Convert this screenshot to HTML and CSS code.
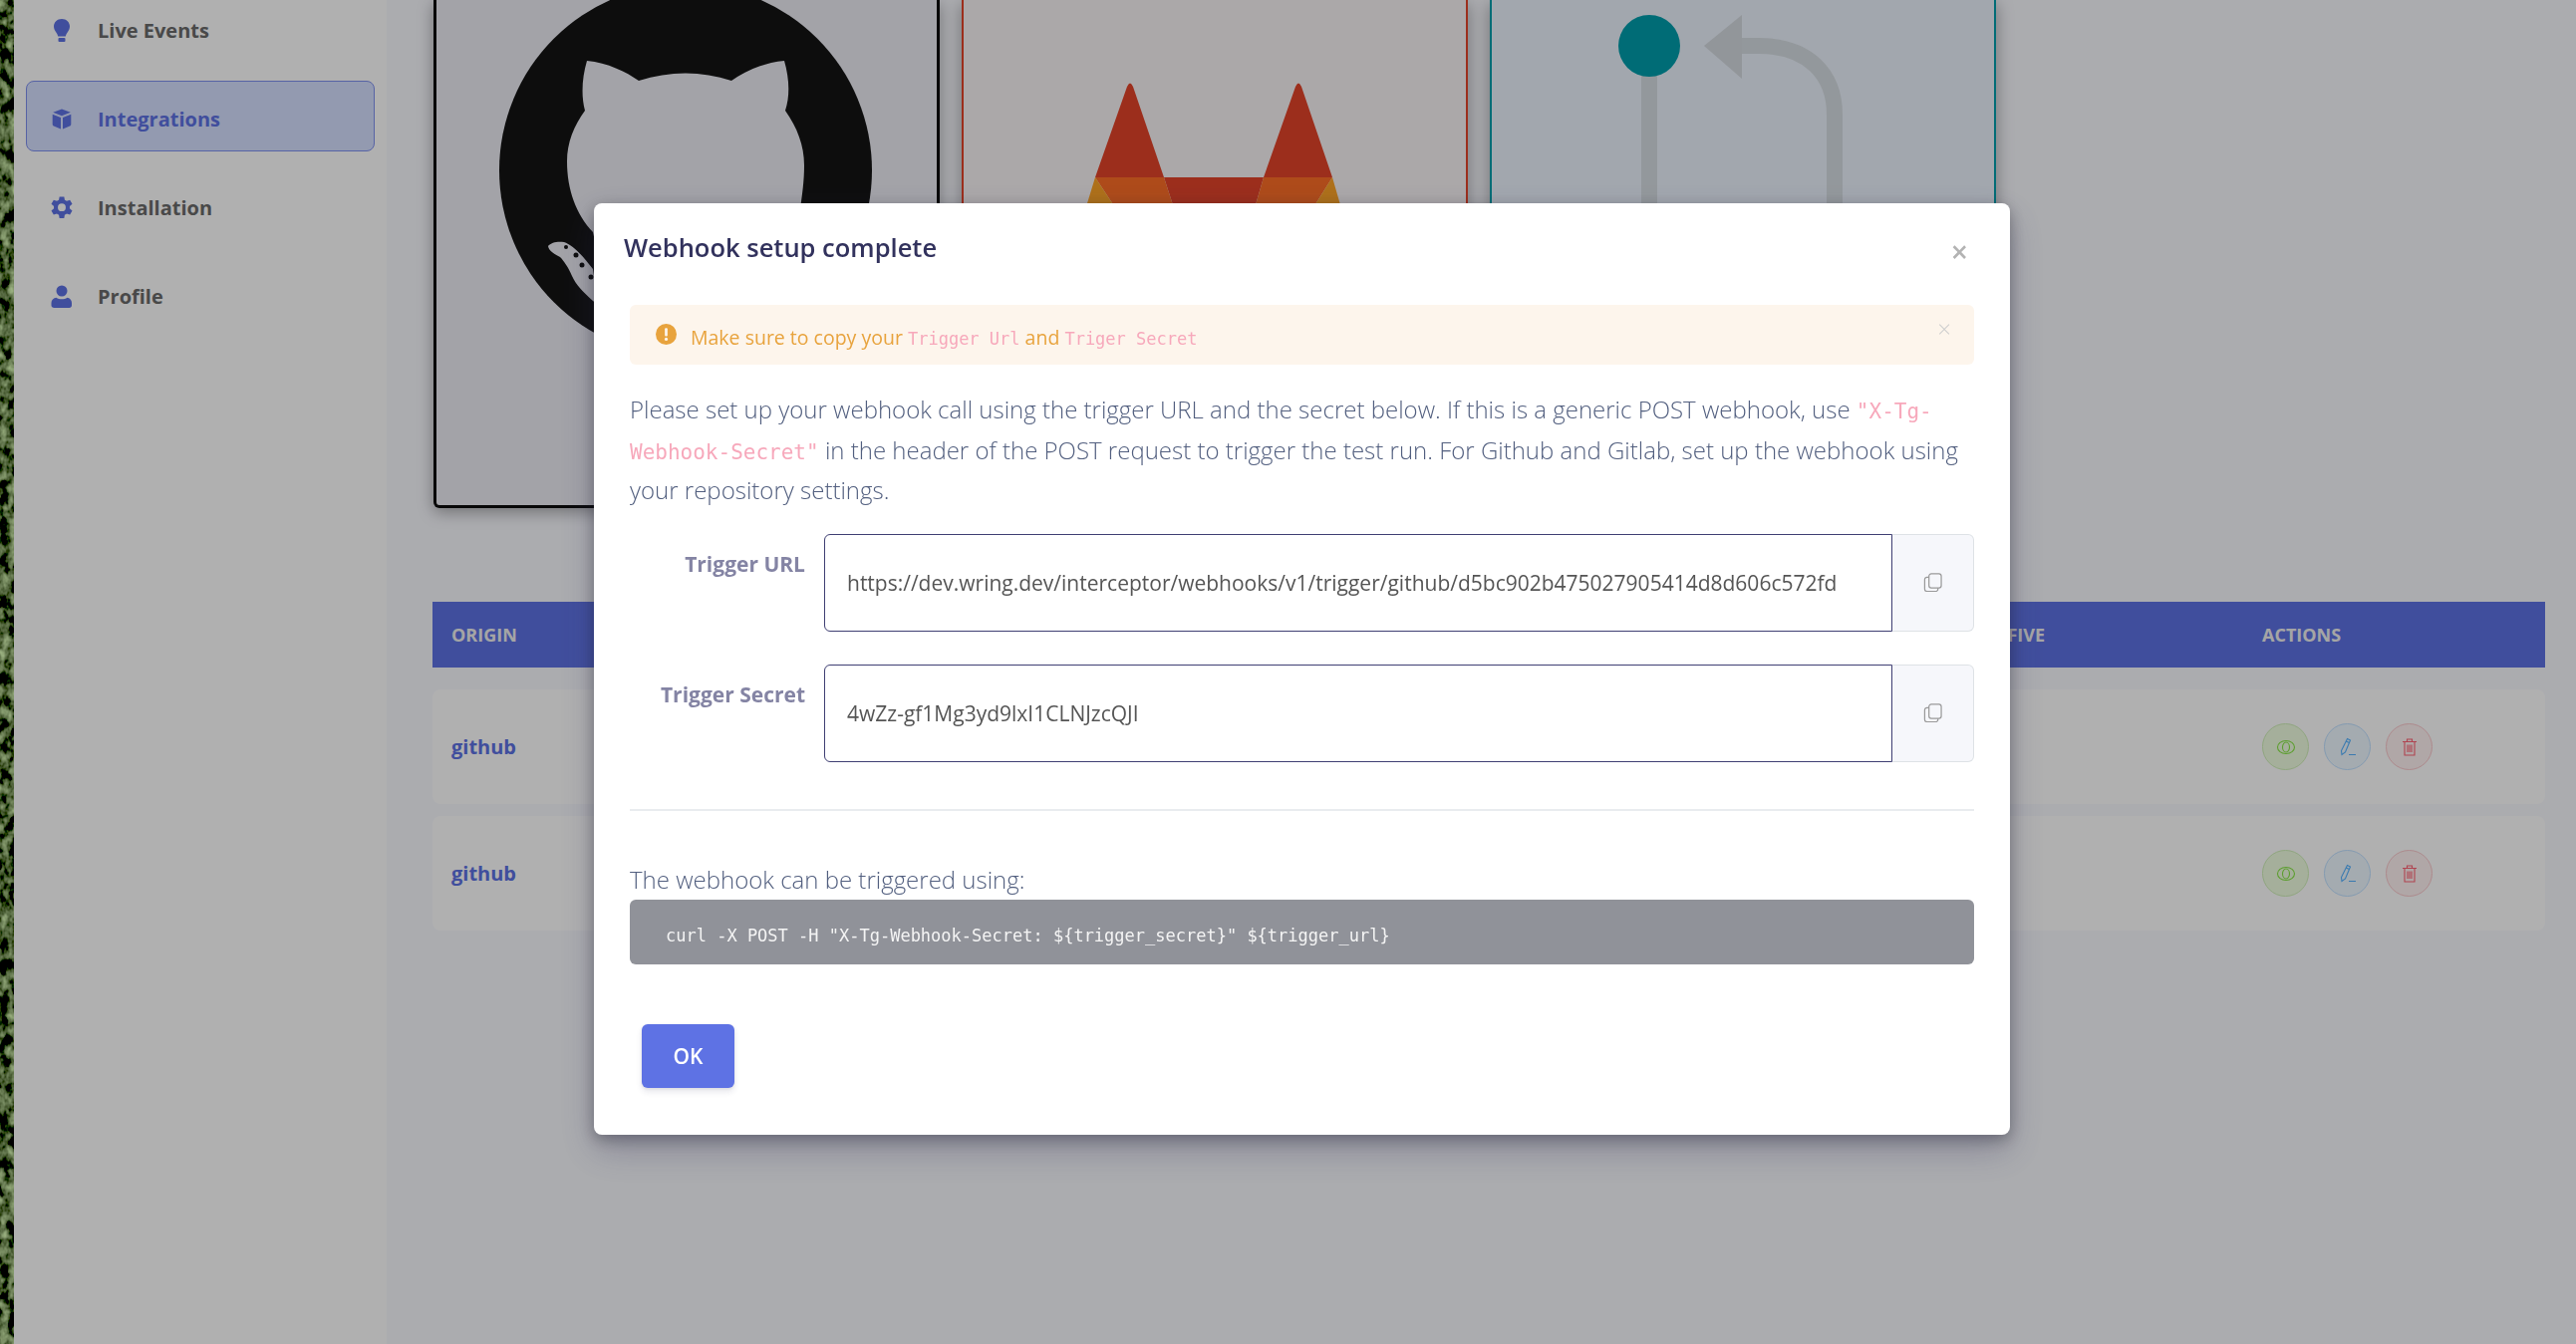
FILE: index.html
```html
<!DOCTYPE html>
<html lang="en">
<head>
<meta charset="UTF-8">
<title>Integrations</title>
<link rel="stylesheet" href="styles.css">
</head>
<body>
<div class="page">
  <svg class="photo-strip" width="14" height="1349">
    <filter id="leaves" x="0" y="0" width="100%" height="100%">
      <feTurbulence type="fractalNoise" baseFrequency="0.11 0.08" numOctaves="3" seed="4"/>
      <feColorMatrix type="matrix" values="1.7 0 0 0 -0.72  2.2 0 0 0 -0.88  1.2 0 0 0 -0.54  0 0 0 0 1"/>
    </filter>
    <rect width="14" height="1349" filter="url(#leaves)"/>
  </svg>

  <nav class="sidebar">
    <a class="nav-item">
      <svg class="nav-icon" viewBox="0 0 21 23"><path d="M10.500 0C5.800 0 2.500 3.400 2.500 7.600c0 2.200.9 3.900 2 5.400 1.200 1.600 1.900 3 2.200 4.600h7.600c.3-1.600 1-3 2.200-4.600 1.100-1.500 2-3.200 2-5.400C18.500 3.400 15.200 0 10.500 0z"/><rect x="7" y="19" width="7" height="4" rx="1"/></svg>
      <span>Live Events</span>
    </a>
    <a class="nav-item active">
      <svg class="nav-icon" viewBox="0 0 21 23"><path d="M10.500 1.500l8.800 3.300-8.800 3.500-8.800-3.500zM1.200 6.700l8.300 3.300v11.500l-7.100-3c-.7-.3-1.200-1-1.200-1.800zM11.500 10l8.300-3.300v10c0 .8-.5 1.500-1.200 1.800l-7.100 3z"/></svg>
      <span>Integrations</span>
    </a>
    <a class="nav-item">
      <svg class="nav-icon" viewBox="1.600 2.700 17.800 18.600"><path d="M12.400 1.500h-3.800l-.5 2.700c-.6.2-1.100.5-1.600.9L3.900 4.200 2 7.500l2.100 1.800c-.1.600-.1 1.200 0 1.800L2 12.900l1.900 3.300 2.600-.9c.5.4 1 .7 1.600.9l.5 2.700h3.800l.5-2.700c.6-.2 1.100-.5 1.600-.9l2.600.9 1.900-3.300-2.100-1.800c.1-.6.100-1.200 0-1.800L19 7.500l-1.900-3.300-2.600.9c-.5-.4-1-.7-1.600-.9zM10.500 7a3.200 3.200 0 1 1 0 6.400 3.200 3.200 0 0 1 0-6.400z" transform="translate(0 1.500)" fill-rule="evenodd"/></svg>
      <span>Installation</span>
    </a>
    <a class="nav-item">
      <svg class="nav-icon" viewBox="0 0 21 23"><circle cx="10.500" cy="6" r="5.500"/><path d="M5 12.800c1.500 1 3.500 1.500 5.500 1.500s4-.5 5.500-1.500c2.500.4 4.500 2.600 4.500 5.200v2.500c0 1.400-1.100 2.500-2.500 2.500h-15C1.100 23 0 21.900 0 20.500V18c0-2.600 2-4.800 5-5.200z"/></svg>
      <span>Profile</span>
    </a>
  </nav>

  <main class="content">
    <div class="cards">
      <div class="card card-github">
        <svg class="card-art" viewBox="438 0 502 507">
          <circle cx="688" cy="171" r="187" fill="#141414"/>
          <path class="cat" d="M589 61C610 63 628 72 641 81C672 71 704 71 734 81C747 72 765 63 787 61C792 78 793 96 788 111C800 128 807 146 807 166C807 182 805 195 803 210L780 300H610L595 233C578 215 569 190 569 162C569 143 576 126 587 111C583 96 584 78 589 61z"/>
          <path class="cat" d="M550 247C553 243 560 242 566 243C575 246 585 257 595 270L600 306L595 302C585 293 578 286 574 277C570 268 566 262 562 258C556 255 551 252 550 247z"/>
          <circle cx="568" cy="248" r="2" fill="#141414"/>
          <circle cx="578" cy="256" r="2.500" fill="#141414"/>
          <circle cx="584" cy="266" r="2.500" fill="#141414"/>
          <circle cx="593" cy="278" r="2.500" fill="#141414"/>
        </svg>
      </div>
      <div class="card card-gitlab">
        <svg class="card-art" viewBox="967 0 504 508">
          <path fill="#e24329" d="M1131 87Q1134 80 1137 87L1168 178H1099zM1300 87Q1303 80 1306 87L1337 178H1268zM1168 178H1268L1250 240H1188z"/>
          <path fill="#fc6d26" d="M1099 178H1168L1188 240H1140zM1268 178H1337L1298 240H1250z"/>
          <path fill="#fca326" d="M1099 178L1140 240H1080zM1337 178L1355 240H1298z"/>
        </svg>
      </div>
      <div class="card card-flow">
        <svg class="card-art" viewBox="1497 0 504 508">
          <path class="flow-line" d="M1655 46V260M1740 46H1765C1815 46 1841 75 1841 115V260"/>
          <path fill="#d4dae0" d="M1710 46L1748 15V79z"/>
          <circle cx="1655" cy="46" r="31" fill="#009dab"/>
        </svg>
      </div>
    </div>

    <section class="table">
      <div class="table-row table-head">
        <span>Origin</span>
        <span>Last Five</span>
        <span>Actions</span>
      </div>
      <div class="table-row table-item">
        <a class="origin">github</a>
        <span></span>
        <div class="actions">
          <button class="round round-green"><svg viewBox="0 0 20 20"><ellipse cx="10" cy="10" rx="8.500" ry="6.500"/><ellipse cx="10" cy="10" rx="3.500" ry="5"/></svg></button>
          <button class="round round-blue"><svg viewBox="0 0 20 20"><path d="M9.500 1.500l3 1.500L7.500 15l-3.500 2.500-.5-4zM8.300 4l3 1.500M11 17.500h7"/></svg></button>
          <button class="round round-red"><svg viewBox="0 0 20 20"><path d="M3 4.500h14M5 4.500V18h10V4.500M7.500 4.500V2h5v2.500M8 7.500v7.500M10 7.500v7.500M12 7.500v7.500"/></svg></button>
        </div>
      </div>
      <div class="table-row table-item">
        <a class="origin">github</a>
        <span></span>
        <div class="actions">
          <button class="round round-green"><svg viewBox="0 0 20 20"><ellipse cx="10" cy="10" rx="8.500" ry="6.500"/><ellipse cx="10" cy="10" rx="3.500" ry="5"/></svg></button>
          <button class="round round-blue"><svg viewBox="0 0 20 20"><path d="M9.500 1.500l3 1.500L7.500 15l-3.500 2.500-.5-4zM8.300 4l3 1.500M11 17.500h7"/></svg></button>
          <button class="round round-red"><svg viewBox="0 0 20 20"><path d="M3 4.500h14M5 4.500V18h10V4.500M7.500 4.500V2h5v2.500M8 7.500v7.500M10 7.500v7.500M12 7.500v7.500"/></svg></button>
        </div>
      </div>
    </section>
  </main>
</div>

<div class="backdrop">
  <div class="modal">
    <header class="modal-header">
      <h5>Webhook setup complete</h5>
      <span class="modal-close">&times;</span>
    </header>
    <div class="alert">
      <svg class="alert-icon" viewBox="0 0 20 20"><circle cx="10" cy="10" r="10"/><rect class="alert-mark" x="8.700" y="4" width="2.600" height="8" rx="1"/><circle class="alert-mark" cx="10" cy="14.700" r="1.500"/></svg>
      <span class="alert-text">Make sure to copy your <code>Trigger Url</code> and <code>Triger Secret</code></span>
      <span class="alert-close">&times;</span>
    </div>
    <p class="intro">Please set up your webhook call using the trigger URL and the secret below. If this is a generic POST webhook, use <code>"X-Tg-Webhook-Secret"</code> in the header of the POST request to trigger the test run. For Github and Gitlab, set up the webhook using your repository settings.</p>
    <div class="field">
      <label>Trigger URL</label>
      <div class="field-value">https://dev.wring.dev/interceptor/webhooks/v1/trigger/github/d5bc902b475027905414d8d606c572fd</div>
      <button class="copy"><svg viewBox="0 0 20 20"><rect x="6" y="1" width="13" height="15" rx="2.500"/><path d="M6 4.500H4A2.500 2.500 0 0 0 1.500 7v10A2.500 2.500 0 0 0 4 19.500h9a2.500 2.500 0 0 0 2.500-2.500v-1"/></svg></button>
    </div>
    <div class="field">
      <label>Trigger Secret</label>
      <div class="field-value">4wZz-gf1Mg3yd9lxI1CLNJzcQJI</div>
      <button class="copy"><svg viewBox="0 0 20 20"><rect x="6" y="1" width="13" height="15" rx="2.500"/><path d="M6 4.500H4A2.500 2.500 0 0 0 1.500 7v10A2.500 2.500 0 0 0 4 19.500h9a2.500 2.500 0 0 0 2.500-2.500v-1"/></svg></button>
    </div>
    <hr>
    <p class="trigger-note">The webhook can be triggered using:</p>
    <pre class="curl">curl -X POST -H "X-Tg-Webhook-Secret: ${trigger_secret}" ${trigger_url}</pre>
    <button class="ok">OK</button>
  </div>
</div>
</body>
</html>
```

FILE: styles.css
```css
* {
  box-sizing: border-box;
}

html, body {
  height: 100%;
  margin: 0;
  overflow: hidden;
}

body {
  font-family: "Open Sans", sans-serif;
  background-color: #f8f9fe;
  color: #525f7f;
}

code, pre {
  font-family: "DejaVu Sans Mono", monospace;
}

code {
  line-height: 1;
}

button {
  font-family: inherit;
  padding: 0;
  cursor: pointer;
}

.page {
  display: flex;
  height: 1349px;
}

.photo-strip {
  flex: 0 0 14px;
  display: block;
}

/* sidebar */
.sidebar {
  flex: 0 0 374px;
  background-color: #fff;
  padding: 0 12px;
}

.nav-item {
  display: flex;
  align-items: center;
  height: 71px;
  margin-bottom: 18px;
  padding: 5px 0 0 24px;
  border: 1px solid transparent;
  border-radius: 8px;
  font-size: 20px;
  font-weight: 700;
  color: #6b6b6b;
}

.nav-item:first-child {
  margin-top: -8px;
}

.nav-item.active {
  background-color: #d5dfff;
  border-color: #7f90ef;
  color: #5e72e4;
}

.nav-icon {
  flex: 0 0 22px;
  width: 22px;
  height: 23px;
  margin-right: 25px;
  fill: #5e72e4;
}

/* main area */
.content {
  flex: 1;
  padding-left: 46px;
  padding-right: 31px;
}

.cards {
  display: flex;
  gap: 22px;
  height: 510px;
  margin-left: 1px;
}

.card {
  flex: 0 0 508px;
  border-style: solid;
  border-width: 0 2px 2px;
  box-shadow: 0 4px 16px rgba(0, 0, 0, 0.35);
  overflow: hidden;
}

.card-art {
  display: block;
  width: 100%;
  height: 100%;
}

.card-github {
  background-color: #ececf3;
  border-width: 0 3px 3px;
  border-color: #0b0b0b;
  border-radius: 0 0 0 6px;
}

.card-gitlab {
  background-color: #f8f3f5;
  border-color: #e24329;
}

.card-flow {
  background-color: #ebf2fc;
  border-color: #009dab;
}

.cat {
  fill: #ececf3;
}

.flow-line {
  fill: none;
  stroke: #d6dde2;
  stroke-width: 16;
}

/* table */
.table {
  margin-top: 94px;
}

.table-row {
  display: grid;
  grid-template-columns: 1fr auto 265px;
  column-gap: 218px;
  align-items: center;
  padding: 0 19px;
}

.table-head {
  height: 66px;
  margin-bottom: 22px;
  padding-bottom: 1px;
  background-color: #5e72e4;
  font-size: 18px;
  font-weight: 700;
  text-transform: uppercase;
  color: #f0f0f0;
}

.table-item {
  height: 115px;
  margin-bottom: 12px;
  background-color: #fff;
  border-radius: 8px;
}

.origin {
  font-size: 20px;
  font-weight: 700;
  color: #5e72e4;
}

.actions {
  display: flex;
  gap: 15px;
}

.round {
  display: flex;
  align-items: center;
  justify-content: center;
  width: 47px;
  height: 47px;
  border-radius: 50%;
  border: 1.500px solid;
}

.round svg {
  width: 20px;
  height: 20px;
  fill: none;
  stroke-width: 1.100;
}

.round-green {
  background-color: #effee1;
  border-color: #d0f0b8;
}

.round-green svg {
  stroke: #86e543;
}

.round-blue {
  background-color: #eef8ff;
  border-color: #bfe0ff;
}

.round-blue svg {
  stroke: #54b1ff;
}

.round-red {
  background-color: #fff2f2;
  border-color: #fbc8cc;
}

.round-red svg {
  stroke: #ff6274;
}

/* dialog */
.backdrop {
  position: fixed;
  top: 0;
  right: 0;
  bottom: 0;
  left: 0;
  background-color: rgba(0, 0, 0, 0.31);
}

.modal {
  width: 1421px;
  height: 935px;
  margin: 204px 0 0 596px;
  padding: 0 36px;
  background-color: #fff;
  border-radius: 8px;
  box-shadow: 0 15px 35px rgba(50, 50, 93, 0.3), 0 5px 15px rgba(0, 0, 0, 0.3);
}

.modal-header {
  display: flex;
  justify-content: space-between;
  height: 102px;
  margin-left: -6px;
  padding-top: 24px;
}

.modal-header h5 {
  margin: 0;
  font-size: 25.500px;
  font-weight: 600;
  line-height: 40px;
  color: #32325d;
}

.modal-close {
  margin: 7px 6px 0 0;
  font-size: 30px;
  font-weight: 600;
  line-height: 36px;
  color: #b3b3b3;
}

.alert {
  display: flex;
  align-items: center;
  height: 60px;
  padding: 0 23px 0 26px;
  background-color: #fdf5ec;
  border-radius: 6px;
  font-size: 19.500px;
  color: #e8a33d;
}

.alert-text {
  padding-top: 4px;
}

.alert code {
  font-size: 17px;
  color: #f7a8bb;
}

.alert-icon {
  width: 21px;
  height: 21px;
  margin: -2px 14px 0 0;
  fill: #e8a33d;
}

.alert-mark {
  fill: #fdf5ec;
}

.alert-close {
  margin: -14px 0 0 auto;
  font-size: 24px;
  font-weight: 300;
  color: #cfcfcf;
}

.intro {
  margin: 25px 0 23px;
  font-size: 24px;
  font-weight: 300;
  line-height: 40.500px;
}

.intro code {
  font-size: 21px;
  color: #f7a8bb;
}

.field {
  display: flex;
  height: 98px;
  margin-bottom: 33px;
}

.field label {
  flex: 0 0 176px;
  padding-top: 16px;
  font-size: 21px;
  font-weight: 700;
  text-align: right;
  color: #8484a4;
}

.field-value {
  flex: 1;
  margin-left: 19px;
  padding: 34px 0 0 22px;
  border: 1.500px solid #3f3f73;
  border-radius: 6px 0 0 6px;
  font-size: 21px;
  color: #555;
}

.copy {
  display: flex;
  align-items: center;
  justify-content: center;
  flex: 0 0 82px;
  background-color: #f6f7fb;
  border: 1px solid #dee2e6;
  border-left: 0;
  border-radius: 0 6px 6px 0;
}

.copy svg {
  width: 19px;
  height: 19px;
  fill: none;
  stroke: #9a9a9a;
  stroke-width: 1.300;
}

hr {
  height: 2px;
  margin: 47px 0 49px;
  border: 0;
  background-color: #e9ecef;
}

.trigger-note {
  margin: 0;
  font-size: 24px;
  font-weight: 300;
  line-height: 40.500px;
}

.curl {
  height: 65px;
  margin: 0;
  padding: 26px 0 0 36px;
  background-color: #909299;
  border-radius: 6px;
  font-size: 17px;
  color: #f4f4f4;
}

.ok {
  display: block;
  width: 93px;
  height: 64px;
  margin: 60px 0 0 12px;
  background-color: #5e72e4;
  border: 0;
  border-radius: 6px;
  box-shadow: 0 4px 6px rgba(50, 50, 93, 0.11), 0 1px 3px rgba(0, 0, 0, 0.08);
  font-size: 21px;
  font-weight: 600;
  color: #fff;
}
```
